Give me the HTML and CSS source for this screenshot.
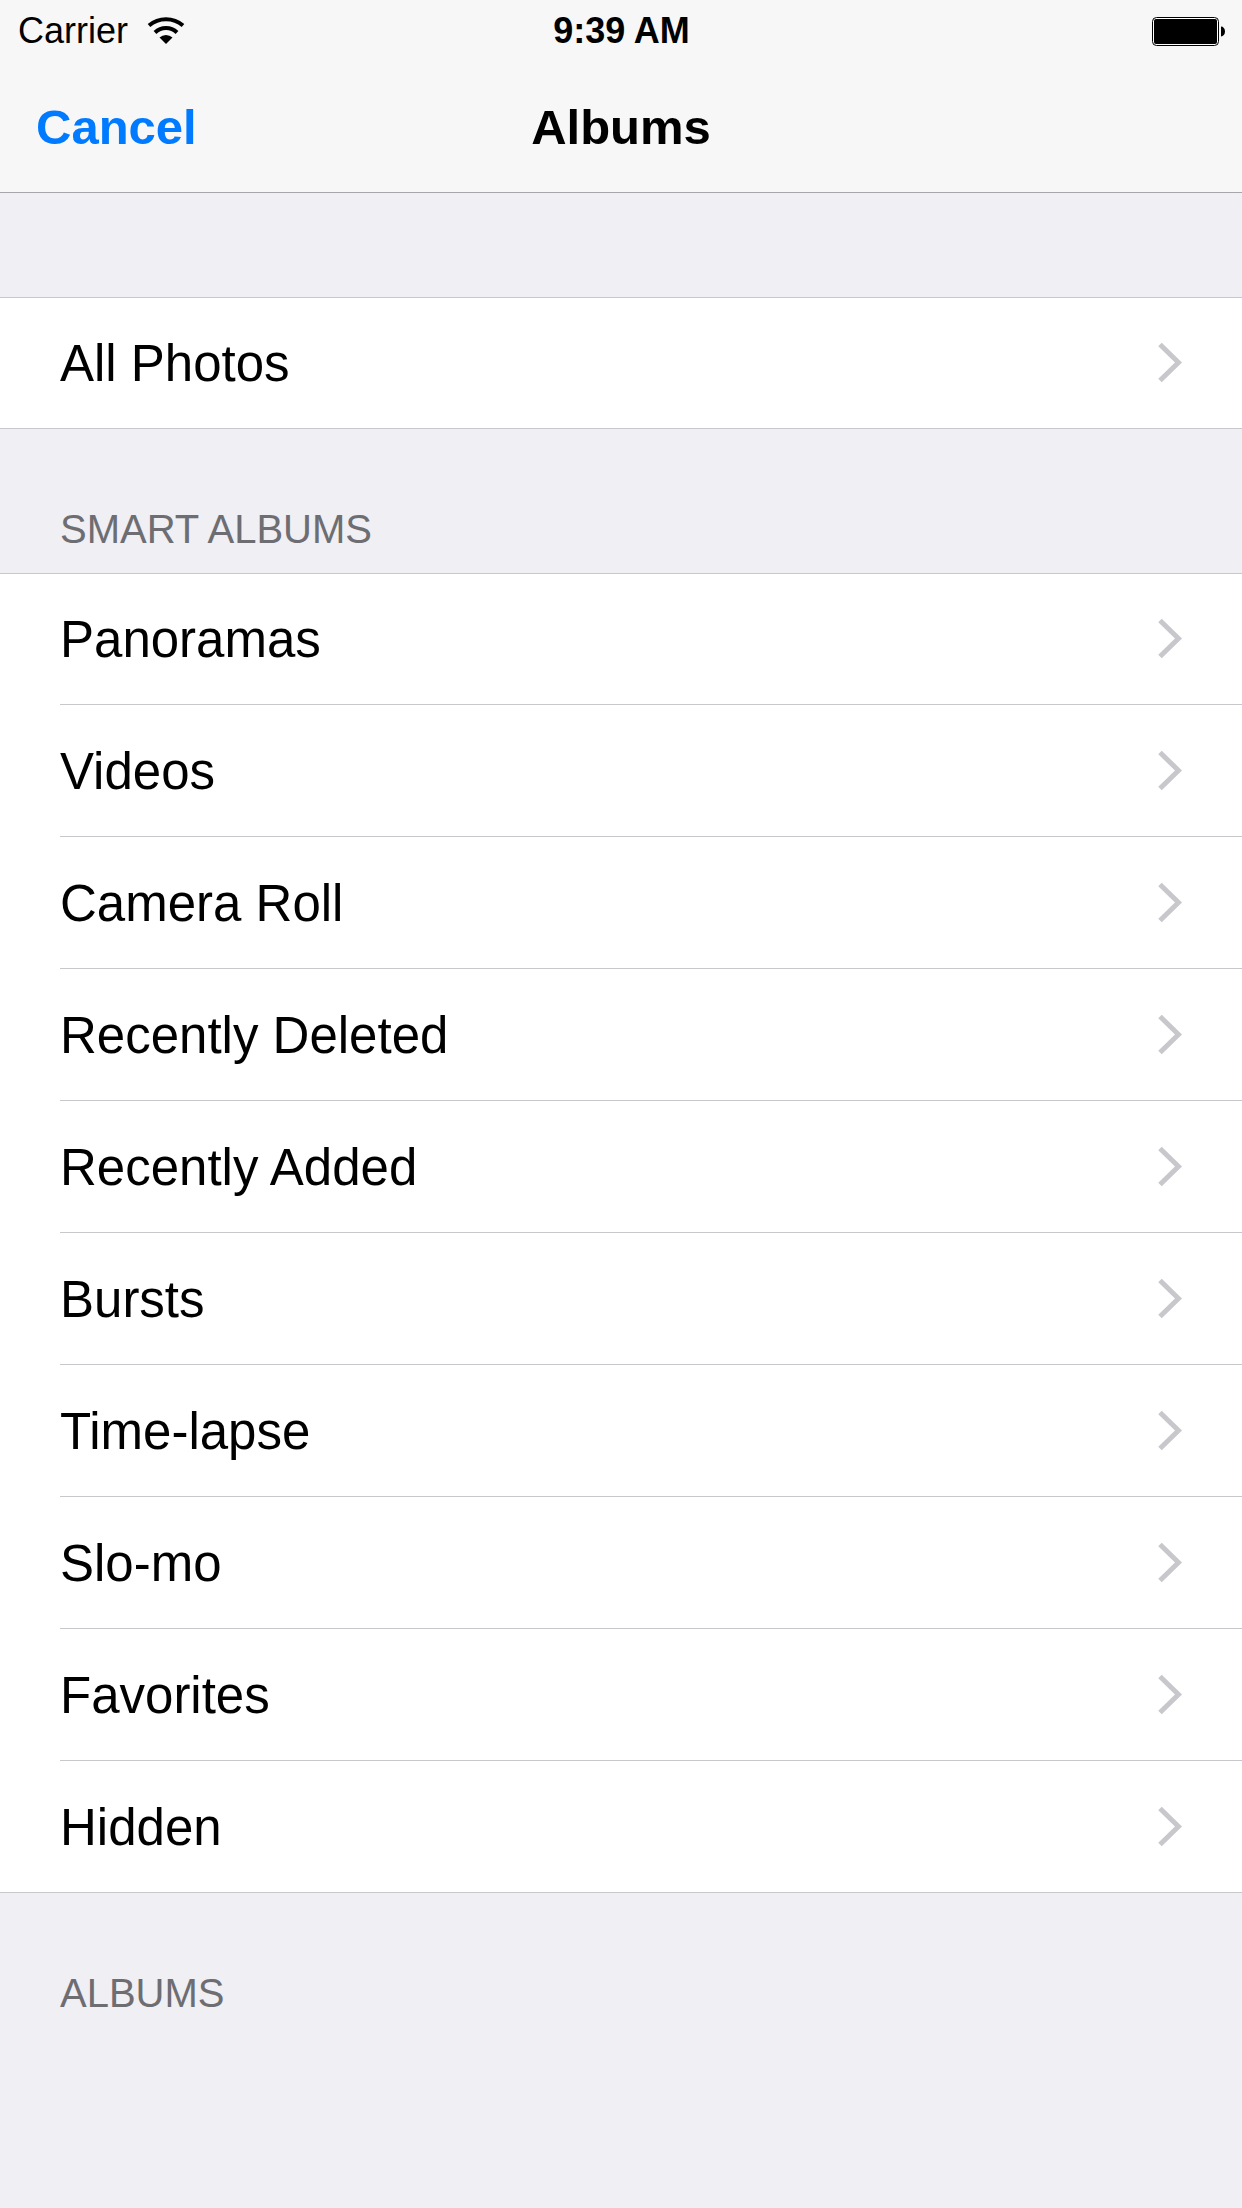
FILE: index.html
```html
<!DOCTYPE html>
<html lang="en">
<head>
<meta charset="utf-8">
<meta name="viewport" content="width=device-width">
<title>Albums</title>
<link rel="stylesheet" href="styles.css">
</head>
<body>
<svg class="defs" width="0" height="0" aria-hidden="true"><symbol id="chevron" viewBox="0 0 24 44"><path d="M2 2.500 L20.500 20.500 L2 38.500" fill="none" stroke="#c7c7cc" stroke-width="5"/></symbol></svg>
<header class="top">
  <div class="status">
    <div class="carrier"><span>Carrier</span>
      <svg class="wifi" viewBox="0 0 38 28" role="img" aria-label="Wi-Fi"><path d="M19 27 L12.500 20.500 A9.500 9.500 0 0 1 25.500 20.500 Z"/><path d="M8 15.500 A16 16 0 0 1 30 15.500" fill="none" stroke="#000" stroke-width="4"/><path d="M2 8.500 A26 26 0 0 1 36 8.500" fill="none" stroke="#000" stroke-width="4"/></svg>
    </div>
    <div class="time">9:39 AM</div>
    <svg class="battery" viewBox="0 0 74 30" role="img" aria-label="Battery full"><rect x="1.500" y="1.500" width="66" height="28" rx="4" fill="#fff" stroke="#000"/><rect x="3" y="3" width="63" height="25" rx="2"/><path d="M70 10.500 A4 5 0 0 1 70 20.500 Z"/></svg>
  </div>
  <nav class="bar"><button class="cancel" type="button">Cancel</button><h1 class="title">Albums</h1></nav>
</header>
<main>
  <ul class="list first">
    <li><a class="row" href="#">All Photos<svg class="chev" aria-hidden="true"><use href="#chevron"/></svg></a></li>
  </ul>
  <h2 class="heading">SMART ALBUMS</h2>
  <ul class="list">
    <li><a class="row" href="#">Panoramas<svg class="chev" aria-hidden="true"><use href="#chevron"/></svg></a></li>
    <li><a class="row" href="#">Videos<svg class="chev" aria-hidden="true"><use href="#chevron"/></svg></a></li>
    <li><a class="row" href="#">Camera Roll<svg class="chev" aria-hidden="true"><use href="#chevron"/></svg></a></li>
    <li><a class="row" href="#">Recently Deleted<svg class="chev" aria-hidden="true"><use href="#chevron"/></svg></a></li>
    <li><a class="row" href="#">Recently Added<svg class="chev" aria-hidden="true"><use href="#chevron"/></svg></a></li>
    <li><a class="row" href="#">Bursts<svg class="chev" aria-hidden="true"><use href="#chevron"/></svg></a></li>
    <li><a class="row" href="#">Time-lapse<svg class="chev" aria-hidden="true"><use href="#chevron"/></svg></a></li>
    <li><a class="row" href="#">Slo-mo<svg class="chev" aria-hidden="true"><use href="#chevron"/></svg></a></li>
    <li><a class="row" href="#">Favorites<svg class="chev" aria-hidden="true"><use href="#chevron"/></svg></a></li>
    <li><a class="row" href="#">Hidden<svg class="chev" aria-hidden="true"><use href="#chevron"/></svg></a></li>
  </ul>
  <h2 class="heading">ALBUMS</h2>
</main>
</body>
</html>
```
FILE: styles.css
```css
* { box-sizing: border-box; }
body { margin: 0; background: #efeff4; color: #000; font: 51px/60px "Liberation Sans", Arial, sans-serif; }
.defs { position: absolute; }
.top { background: #f7f7f7; border-bottom: 1px solid #a7a7aa; }
.status { display: grid; grid-template-columns: 1fr auto 1fr; align-items: center; height: 60px; padding: 0 17px 0 18px; font-size: 36px; line-height: 62px; }
.carrier { display: flex; align-items: center; gap: 19px; }
.wifi { width: 38px; height: 28px; }
.time { font-weight: bold; }
.battery { width: 74px; height: 30px; justify-self: end; }
.bar { display: grid; grid-template-columns: 1fr auto 1fr; align-items: center; height: 132px; padding: 2px 36px 0; }
.cancel { justify-self: start; border: 0; padding: 0; background: none; color: #007aff; font: inherit; font-size: 49px; font-weight: bold; }
.title { margin: 0; font-size: 49px; }
.list { margin: 0; padding: 0; list-style: none; background: #fff; border: solid #c8c7cc; border-width: 1px 0; }
.first { margin-top: 104px; }
.list li { padding-left: 60px; }
.row { display: flex; align-items: center; justify-content: space-between; height: 132px; padding: 2px 60px 0 0; color: inherit; text-decoration: none; border-bottom: 1px solid #c8c7cc; }
/* The list's own top and bottom rules count towards the row pitch. */
.list li:first-child .row { height: 131px; }
.list li:last-child .row { height: 131px; border-bottom: 0; }
.list li:only-child .row { height: 130px; }
.chev { width: 24px; height: 44px; }
.heading { margin: 0; padding: 76px 60px 20px; font-size: 40px; line-height: 48px; font-weight: normal; color: #6d6d72; }
```
